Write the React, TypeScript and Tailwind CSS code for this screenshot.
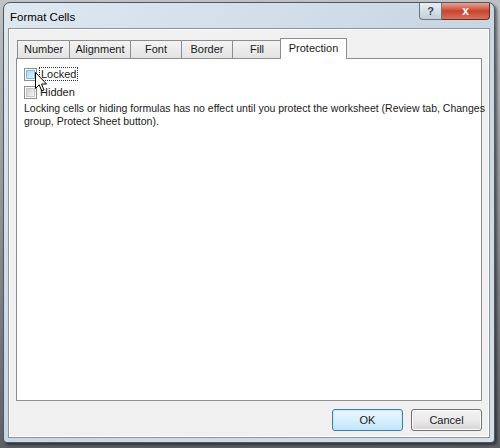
import React from "react";

const font = { fontFamily: '"Liberation Sans", Arial, sans-serif' };

function Tab({ label, w }: { label: string; w: string }) {
  return (
    <div
      className={`${w} h-[18px] mt-[3px] border border-b-0 border-[#8d8d8d] -ml-px first:ml-0 bg-gradient-to-b from-[#f3f3f3] to-[#e3e3e3] flex items-center justify-center text-[11px] text-[#1a1a1a]`}
    >
      {label}
    </div>
  );
}

function Checkbox({ hover }: { hover?: boolean }) {
  return (
    <div className="w-[13px] h-[13px] shrink-0 border border-[#8f8f8f] bg-white p-px flex">
      <div
        className={`flex-1 ${hover ? "bg-gradient-to-br from-[#a9d9f2] to-[#d9f1fc] border border-[#7dbfe0]" : "bg-gradient-to-br from-[#cfcfcf] to-[#f6f6f6] border border-[#c4c4c4]"}`}
      />
    </div>
  );
}

export default function App() {
  return (
    <div
      className="w-[500px] h-[448px] overflow-hidden bg-gradient-to-b from-[#bfc3c7] to-[#5d6166] pl-[3px] pt-[2px] relative"
      style={font}
    >
      {/* window */}
      <div className="w-[492px] h-[441px] rounded-t-[7px] rounded-b-[4px] border border-[#4e5963] bg-gradient-to-br from-[#dfe8f1] via-[#c9d6e2] to-[#d6dfe8] flex flex-col shadow-[2px_2px_3px_rgba(0,0,0,0.5)]">
        {/* title bar */}
        <div className="h-[25px] flex items-start pl-[6px] pr-[4px]">
          <div className="text-[11.5px] text-black mt-[6px]">Format Cells</div>
          <div className="ml-auto flex">
            <div className="w-[23px] h-[17px] rounded-bl-[4px] border border-t-0 border-[#6b7782] bg-gradient-to-b from-[#e9eef3] to-[#c4ced8] flex items-center justify-center text-[11px] font-bold text-[#3a4650]">
              ?
            </div>
            <div className="w-[48px] h-[17px] rounded-br-[4px] border border-t-0 border-l-0 border-[#6d2a20] bg-gradient-to-b from-[#e6a293] via-[#c8432e] to-[#d5705c] flex items-center justify-center text-[12px] font-bold text-white">
              x
            </div>
          </div>
        </div>
        {/* client */}
        <div className="flex-1 mx-[4px] mb-[4px] border border-[#8896a4] bg-[#f0f0f0] flex flex-col pl-[7px] pr-[7px] pt-[8px] shadow-[inset_0_0_0_1px_#ffffff]">
          {/* tabs */}
          <div className="flex items-end h-[21px] pl-[1px]">
            <Tab label="Number" w="w-[53px]" />
            <Tab label="Alignment" w="w-[62px]" />
            <Tab label="Font" w="w-[52px]" />
            <Tab label="Border" w="w-[52px]" />
            <Tab label="Fill" w="w-[50px]" />
            <div className="w-[67px] h-[21px] -ml-[2px] border border-b-0 border-[#8d8d8d] bg-white flex items-center justify-center text-[11px] text-[#1a1a1a] relative z-10 -mb-px pb-[2px]">
              Protection
            </div>
          </div>
          {/* panel */}
          <div className="h-[343px] border border-[#8d8d8d] bg-white pl-[7px] pt-[8px] relative">
            <div className="flex items-center gap-[2px] h-[14px]">
              <Checkbox hover />
              <div className="text-[11px] leading-[12px] px-[1px] border border-dotted border-[#333] text-[#1a1a1a]">
                Locked
              </div>
            </div>
            <div className="flex items-center gap-[3px] h-[14px] mt-[4px]">
              <Checkbox />
              <div className="text-[11px] leading-[12px] text-[#1a1a1a]">Hidden</div>
            </div>
            <p className="mt-[3px] text-[10.5px] leading-[13px] text-[#1a1a1a] whitespace-nowrap">
              Locking cells or hiding formulas has no effect until you protect the worksheet (Review tab, Changes
              <br />
              group, Protect Sheet button).
            </p>
            {/* mouse cursor */}
            <svg className="absolute left-[18px] top-[13px]" width="13" height="21" viewBox="0 0 13 21">
              <path d="M0.5 0.5 L0.5 16.5 L4.2 12.8 L6.8 19 L9 18 L6.5 12 L11.5 12 Z" fill="white" stroke="black" strokeWidth="1" strokeLinejoin="miter" />
            </svg>
          </div>
          {/* buttons */}
          <div className="flex justify-end gap-[8px] mt-[8px]">
            <button className="w-[71px] h-[22px] rounded-[3px] border border-[#3c7fb1] bg-gradient-to-b from-[#eaf6fd] via-[#d9f0fc] to-[#bee6fd] shadow-[inset_0_0_0_1px_#c5e7f9] text-[11px] text-[#1a1a1a]">
              OK
            </button>
            <button className="w-[71px] h-[22px] rounded-[3px] border border-[#707070] bg-gradient-to-b from-[#f2f2f2] via-[#ebebeb] to-[#d6d6d6] shadow-[inset_0_0_0_1px_#fcfcfc] text-[11px] text-[#1a1a1a]">
              Cancel
            </button>
          </div>
        </div>
      </div>
    </div>
  );
}
